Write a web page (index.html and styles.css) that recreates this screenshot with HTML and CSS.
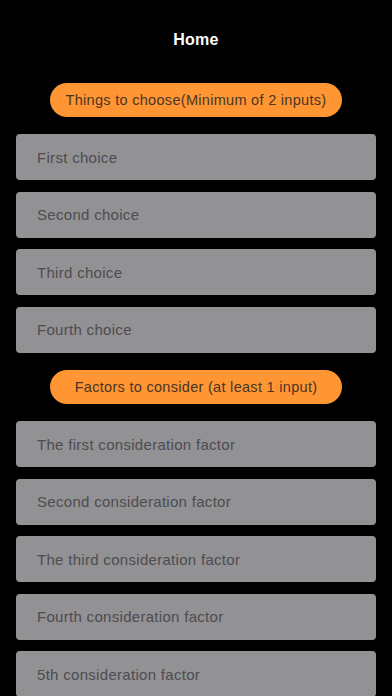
FILE: index.html
```html
<!DOCTYPE html>
<html>
<head>
<meta charset="utf-8">
<link rel="stylesheet" href="styles.css">
</head>
<body>
<div class="screen">
  <header class="nav"><h1 class="title">Home</h1></header>
  <div class="pill-row"><div class="pill">Things to choose(Minimum of 2 inputs)</div></div>
  <div class="fields">
    <div class="field">First choice</div>
    <div class="field">Second choice</div>
    <div class="field">Third choice</div>
    <div class="field">Fourth choice</div>
  </div>
  <div class="pill-row second"><div class="pill">Factors to consider (at least 1 input)</div></div>
  <div class="fields">
    <div class="field">The first consideration factor</div>
    <div class="field">Second consideration factor</div>
    <div class="field">The third consideration factor</div>
    <div class="field">Fourth consideration factor</div>
    <div class="field">5th consideration factor</div>
  </div>
</div>
</body>
</html>
```
FILE: styles.css
```css
html, body {
  margin: 0;
  padding: 0;
  background: #000;
  height: 696px;
  overflow: hidden;
}
.screen {
  font-family: "Helvetica Neue", "Liberation Sans", Arial, sans-serif;
  display: flex;
  flex-direction: column;
}
.nav {
  height: 83px;
  display: flex;
  justify-content: center;
  align-items: flex-start;
}
.title {
  margin: 30px 0 0;
  font-size: 16px;
  font-weight: bold;
  color: #fff;
  line-height: 20px;
  letter-spacing: 0.2px;
}
.pill-row {
  display: flex;
  justify-content: center;
}
.pill-row.second {
  margin-top: 17px;
}
.pill {
  width: 292px;
  height: 34px;
  border-radius: 17px;
  background: #ff9533;
  color: #4a3623;
  font-size: 14.5px;
  letter-spacing: 0.3px;
  display: flex;
  align-items: center;
  justify-content: center;
}
.fields {
  display: flex;
  flex-direction: column;
  gap: 11.5px;
  padding: 17px 16px 0;
}
.pill-row.second + .fields {
  padding-top: 17.5px;
}
.field {
  height: 46px;
  border-radius: 4px;
  background: #929194;
  color: #4d4c50;
  font-size: 15px;
  letter-spacing: 0.3px;
  display: flex;
  align-items: center;
  padding-left: 21px;
}
```
